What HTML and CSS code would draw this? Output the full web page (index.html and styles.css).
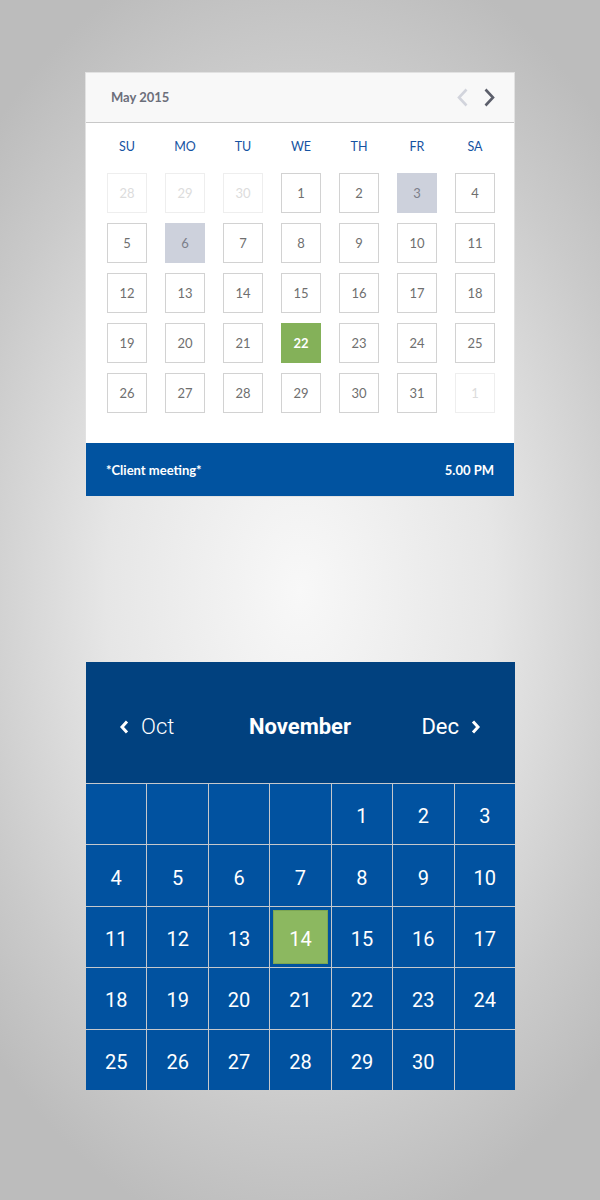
FILE: index.html
```html
<!DOCTYPE html>
<html lang="en">
<head>
  <meta charset="UTF-8">
  <title>Calendars</title>
  <link rel="stylesheet" href="styles.css">
</head>
<body>
<div class="page">

  <!-- small month view with an event strip -->
  <div class="agenda">
    <div class="agenda-head">
      <span class="agenda-title">May 2015</span>
      <div class="agenda-nav">
        <svg class="nav-prev" width="13" height="19" viewBox="0 0 13 19"><polyline points="10.5,1.5 3,9.5 10.5,17.5"/></svg>
        <svg class="nav-next" width="13" height="19" viewBox="0 0 13 19"><polyline points="2.5,1.5 10,9.5 2.5,17.5"/></svg>
      </div>
    </div>
    <div class="agenda-body">
      <div class="weekdays">
        <span>SU</span><span>MO</span><span>TU</span><span>WE</span><span>TH</span><span>FR</span><span>SA</span>
      </div>
      <div class="days">
        <span class="day faded">28</span><span class="day faded">29</span><span class="day faded">30</span><span class="day">1</span><span class="day">2</span><span class="day busy">3</span><span class="day">4</span>
        <span class="day">5</span><span class="day busy">6</span><span class="day">7</span><span class="day">8</span><span class="day">9</span><span class="day">10</span><span class="day">11</span>
        <span class="day">12</span><span class="day">13</span><span class="day">14</span><span class="day">15</span><span class="day">16</span><span class="day">17</span><span class="day">18</span>
        <span class="day">19</span><span class="day">20</span><span class="day">21</span><span class="day today">22</span><span class="day">23</span><span class="day">24</span><span class="day">25</span>
        <span class="day">26</span><span class="day">27</span><span class="day">28</span><span class="day">29</span><span class="day">30</span><span class="day">31</span><span class="day faded">1</span>
      </div>
    </div>
    <div class="agenda-foot">
      <span>*Client meeting*</span>
      <span>5.00 PM</span>
    </div>
  </div>

  <!-- big month view -->
  <div class="month">
    <div class="month-head">
      <div class="month-prev">
        <svg width="11" height="14" viewBox="0 0 11 14"><polyline points="8,1.5 3,7 8,12.5"/></svg>
        <span>Oct</span>
      </div>
      <div class="month-title">November</div>
      <div class="month-next">
        <span>Dec</span>
        <svg width="11" height="14" viewBox="0 0 11 14"><polyline points="3,1.5 8,7 3,12.5"/></svg>
      </div>
    </div>
    <div class="month-grid">
      <span></span><span></span><span></span><span></span><span>1</span><span>2</span><span>3</span>
      <span>4</span><span>5</span><span>6</span><span>7</span><span>8</span><span>9</span><span>10</span>
      <span>11</span><span>12</span><span>13</span><span class="holder"><b class="mark">14</b></span><span>15</span><span>16</span><span>17</span>
      <span>18</span><span>19</span><span>20</span><span>21</span><span>22</span><span>23</span><span>24</span>
      <span>25</span><span>26</span><span>27</span><span>28</span><span>29</span><span>30</span><span></span>
    </div>
  </div>

</div>
</body>
</html>
```

FILE: styles.css
```css
html, body {
  margin: 0;
  padding: 0;
}

body {
  min-height: 1200px;
  background: radial-gradient(ellipse 430px 660px at 300px 590px, #f8f8f8 0%, #e6e6e6 45%, #cacaca 80%, #bcbcbc 100%);
  background-color: #bcbcbc;
}

.page {
  padding: 73px 0 0 86px;
}

/* ---------- small calendar ---------- */

.agenda {
  width: 428px;
  background: #fff;
  box-shadow: 0 0 0 1px #e2e2e2;
  font-family: "Lato", "Open Sans", sans-serif;
}

.agenda-head {
  height: 49px;
  background: #f8f8f8;
  border-bottom: 1px solid #c8c8c8;
  display: flex;
  align-items: center;
  justify-content: space-between;
  padding: 0 18px 0 25px;
}

.agenda-title {
  font-size: 13px;
  font-weight: 700;
  color: #6c6f7b;
  margin-top: -1px;
}

.agenda-nav {
  display: flex;
  gap: 14px;
}

.agenda-nav polyline {
  fill: none;
  stroke-width: 2.6;
}

.nav-prev polyline {
  stroke: #d2d4dc;
}

.nav-next polyline {
  stroke: #5c5f6b;
}

.agenda-body {
  padding: 17px 19px 30px 21px;
}

.weekdays,
.days {
  display: grid;
  grid-template-columns: repeat(7, 40px);
  column-gap: 18px;
}

.weekdays {
  height: 14px;
  margin-bottom: 19px;
}

.weekdays span {
  text-align: center;
  font-size: 12.5px;
  line-height: 14px;
  color: #1553a2;
}

.days {
  row-gap: 10px;
}

.day {
  box-sizing: border-box;
  height: 40px;
  border: 1px solid #d2d2d2;
  display: flex;
  align-items: center;
  justify-content: center;
  font-size: 13px;
  color: #6f6f6f;
}

.day.faded {
  border-color: #eeeeee;
  color: #dcdcdc;
}

.day.busy {
  border: none;
  background: #cdd1dc;
  color: #7c7f8a;
}

.day.today {
  border: none;
  background: #84b159;
  color: #fff;
  font-weight: 700;
}

.agenda-foot {
  height: 53px;
  background: #0153a0;
  display: flex;
  align-items: center;
  justify-content: space-between;
  padding: 0 20px;
  font-size: 13px;
  font-weight: 700;
  color: #fff;
}

/* ---------- big calendar ---------- */

.month {
  width: 429px;
  margin-top: 166px;
  font-family: "Roboto", sans-serif;
  color: #fff;
}

.month-head {
  box-sizing: border-box;
  height: 121px;
  background: #01417f;
  display: grid;
  grid-template-columns: 1fr auto 1fr;
  align-items: center;
  padding: 8px 34px 0 33px;
  font-size: 22px;
}

.month-head svg polyline {
  fill: none;
  stroke: #fff;
  stroke-width: 3;
}

.month-prev,
.month-next {
  display: flex;
  align-items: center;
  gap: 11px;
}

.month-prev span {
  font-weight: 300;
}

.month-next {
  justify-content: flex-end;
}

.month-title {
  font-weight: 700;
}

.month-grid {
  display: grid;
  grid-template-columns: repeat(7, 1fr);
  grid-auto-rows: 60.4px;
  gap: 1px;
  background: #c6c8cc;
  border-top: 1px solid #c6c8cc;
}

.month-grid span {
  background: #0152a0;
  display: flex;
  align-items: center;
  justify-content: center;
  padding-top: 4px;
  font-size: 20px;
}

.month-grid span.holder {
  padding: 3px;
  align-items: stretch;
  justify-content: stretch;
}

.month-grid .mark {
  flex: 1;
  box-sizing: border-box;
  padding-top: 4px;
  background: #8cb860;
  border: 1px solid #7da653;
  font-weight: 400;
  display: flex;
  align-items: center;
  justify-content: center;
}
```
